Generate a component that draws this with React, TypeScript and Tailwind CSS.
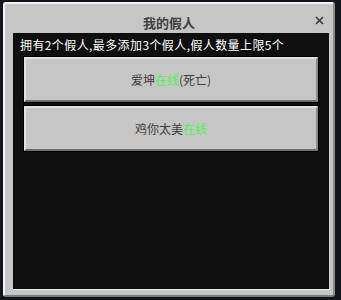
import React from "react";

const font = { fontFamily: '"Noto Sans CJK SC", "Noto Sans", sans-serif' };

function BotButton({ name, dead }: { name: string; dead?: boolean }) {
  return (
    <div className="h-[45px] w-full bg-[#c6c6c6] border-t-2 border-l-2 border-t-[#e2e2e2] border-l-[#e2e2e2] border-b-2 border-r-2 border-b-[#6e6e6e] border-r-[#8a8a8a] outline outline-1 outline-black flex items-center justify-center text-[12px] text-[#404040]">
      <span>{name}</span>
      <span className="text-[#55f055]">在线</span>
      {dead && <span>(死亡)</span>}
    </div>
  );
}

export default function App() {
  return (
    <div className="w-[341px] h-[300px] bg-[#15151c] pt-[2px] pl-[3px]" style={font}>
      <div className="w-[332px] h-[295px] bg-[#c6c6c6] rounded-[3px] border-t-2 border-l-2 border-t-[#f2f2f2] border-l-[#f2f2f2] border-b-2 border-r-2 border-b-[#7a7a7a] border-r-[#8a8a8a] flex flex-col">
        {/* Title bar */}
        <div className="relative h-[29px] flex items-center justify-center">
          <span className="text-[13px] font-semibold text-[#404040] mt-[9px]">我的假人</span>
          <svg
            className="absolute right-[9px] top-[12px]"
            width="9"
            height="9"
            viewBox="0 0 9 9"
          >
            <path d="M1 1 L8 8 M8 1 L1 8" stroke="#3a3a3a" strokeWidth="1.6" />
          </svg>
        </div>

        {/* Black panel */}
        <div className="ml-[8px] mr-[3px] mb-[5px] flex-1 bg-[#0f0f10] border-b border-r border-b-[#eeeeee] border-r-[#d0d0d0] flex flex-col">
          <div className="text-white text-[12px] leading-[16px] pl-[7px] pt-[4px] tracking-[0.4px]">
            拥有2个假人,最多添加3个假人,假人数量上限5个
          </div>
          <div className="flex flex-col gap-[4px] px-[11px] mt-[4px]">
            <BotButton name="爱坤" dead />
            <BotButton name="鸡你太美" />
          </div>
        </div>
      </div>
    </div>
  );
}
